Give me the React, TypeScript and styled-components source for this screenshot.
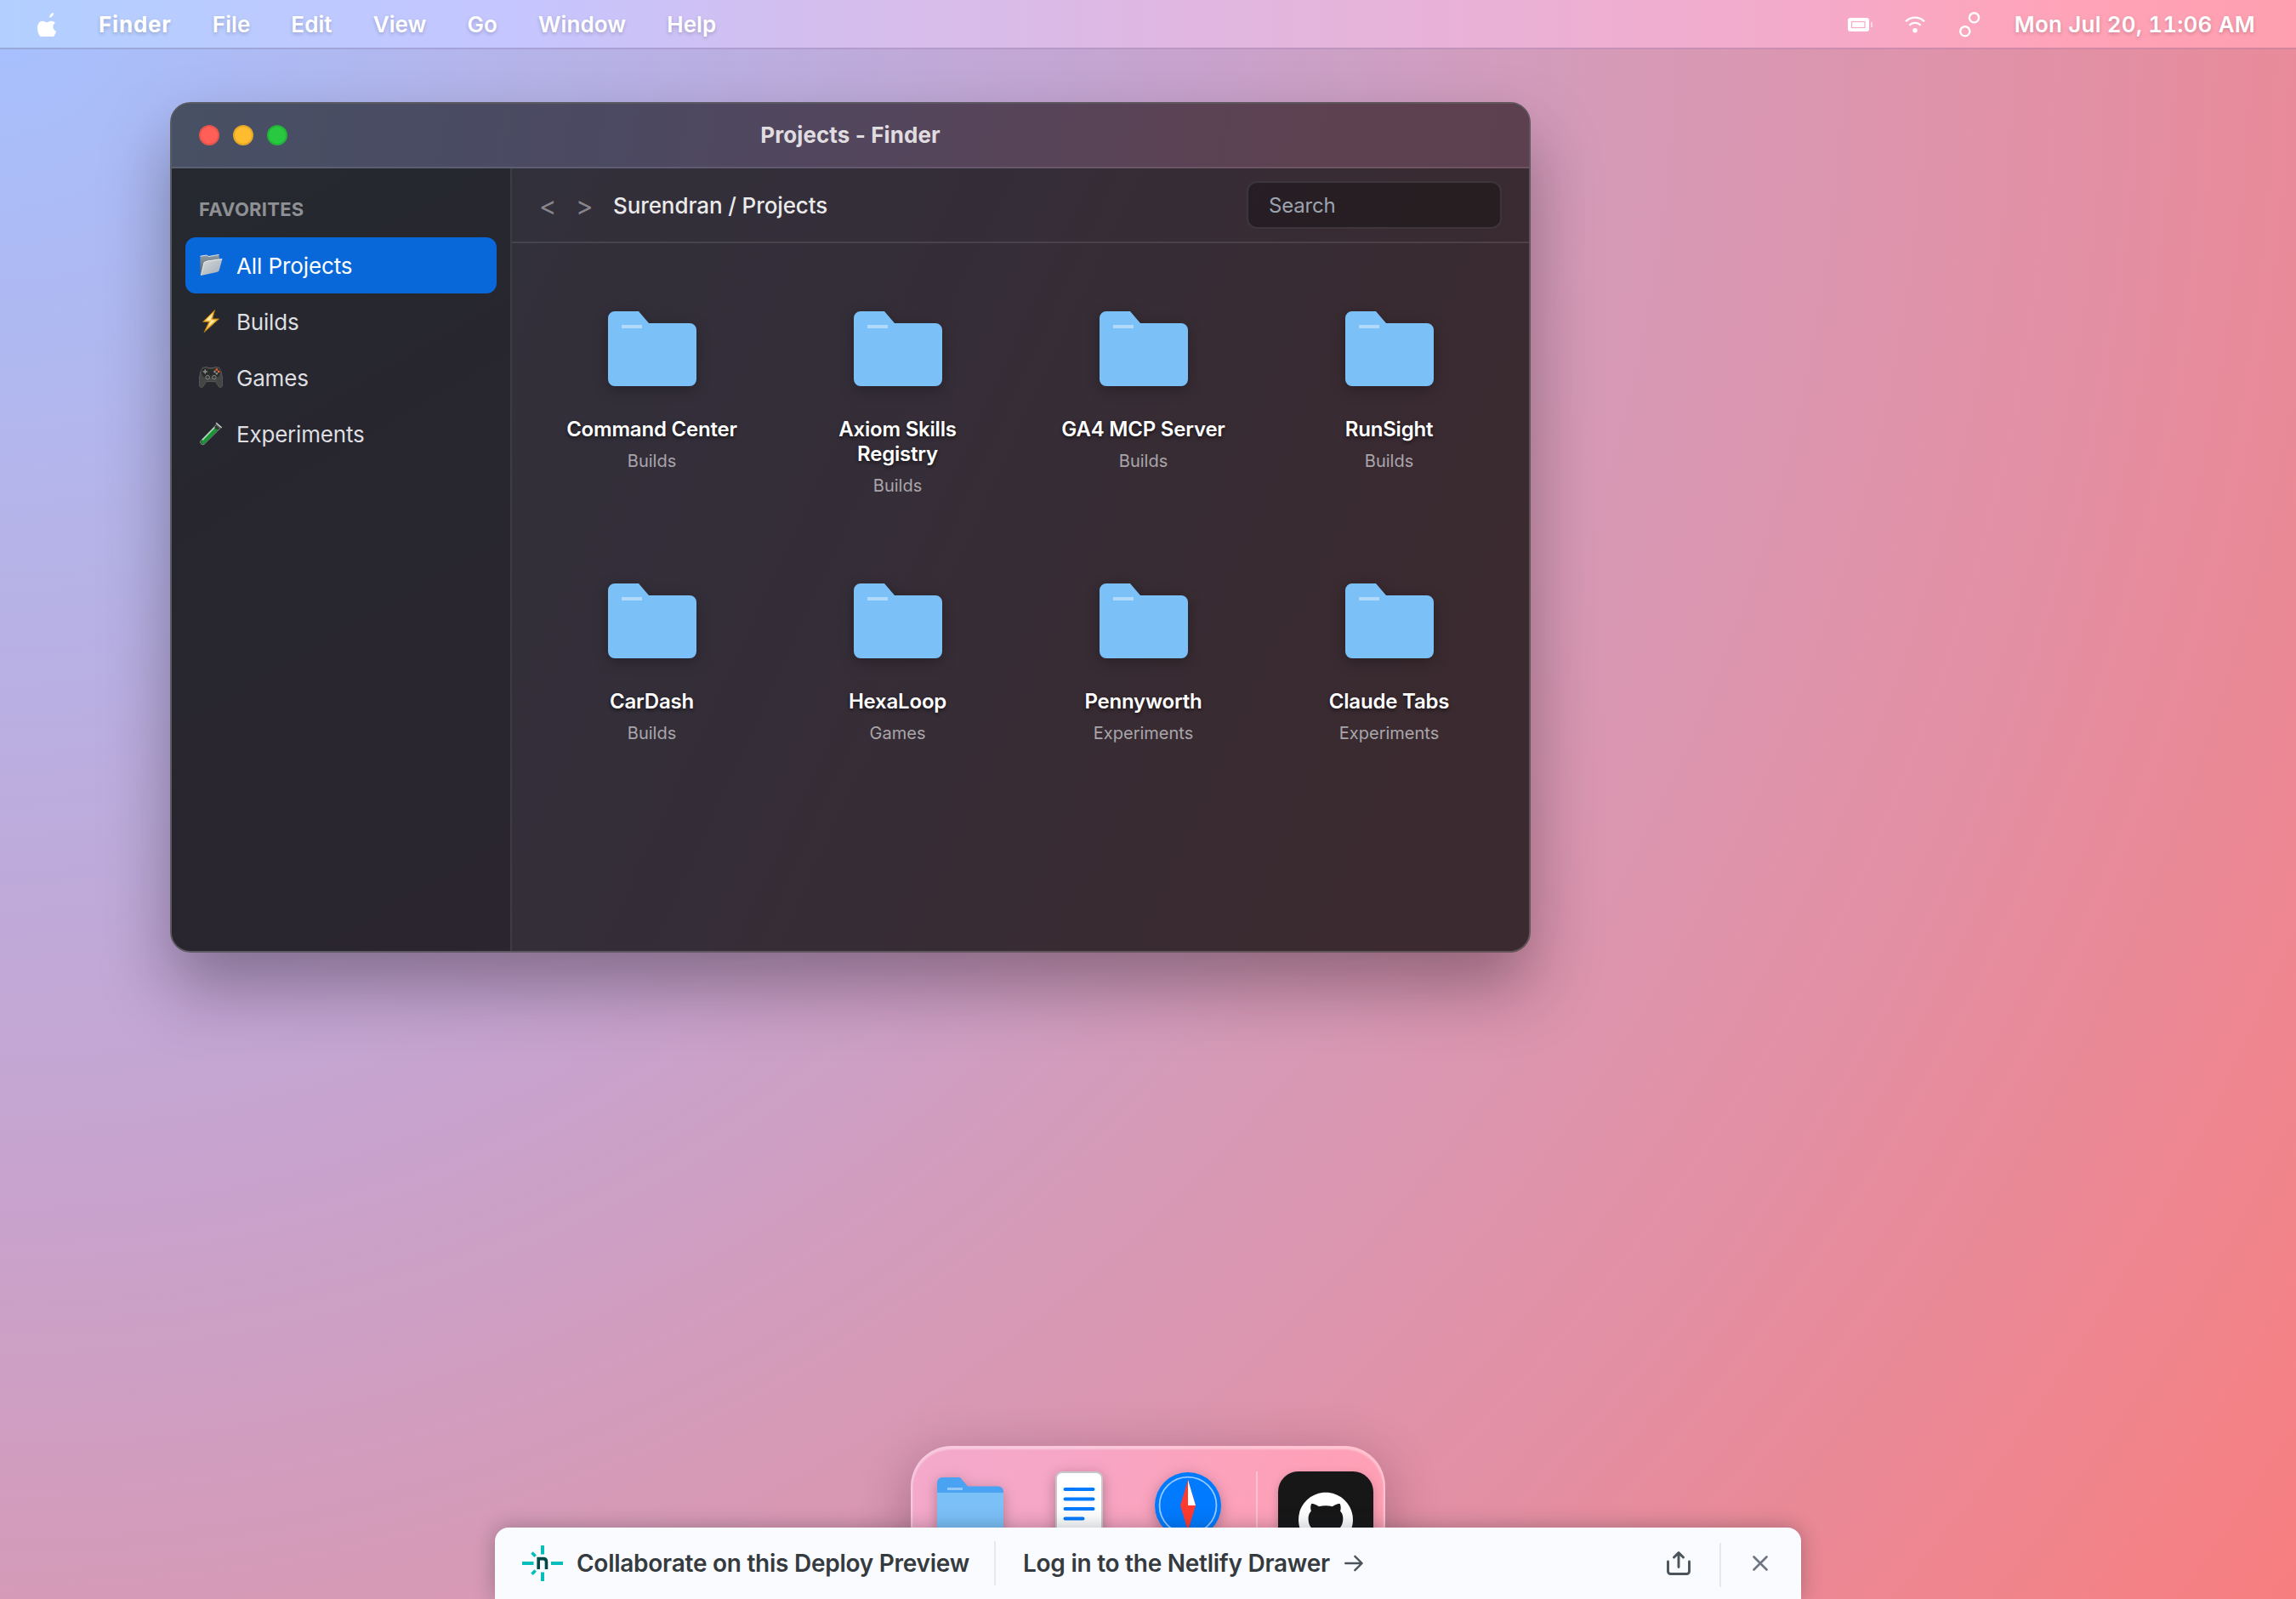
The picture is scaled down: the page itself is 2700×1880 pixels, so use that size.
import React from "react";
import styled, { createGlobalStyle, css } from "styled-components";
import { SiGithub } from "react-icons/si";

const GlobalStyle = createGlobalStyle`
  *, *::before, *::after { box-sizing: border-box; }
  html, body { margin: 0; padding: 0; }
  body { font-family: Inter, "Liberation Sans", sans-serif; overflow: hidden; }
`;

const Desktop = styled.div`
  position: relative;
  width: 2700px;
  height: 1880px;
  overflow: hidden;
  display: flex;
  flex-direction: column;
  background: radial-gradient(circle at 0 0, #a6c1ff 0%, #c7a3ce 42%, #d69ab7 58%, #e38fa3 75.7%, #f77e7f 100%);
`;

/* ---------- Menu bar ---------- */

const MenuBar = styled.header`
  height: 58px;
  flex: none;
  display: flex;
  align-items: center;
  justify-content: space-between;
  padding: 1px 48px 0 44px;
  color: #fff;
  font-size: 26px;
  border-bottom: 2px solid rgba(70, 50, 100, 0.24);
  background: linear-gradient(90deg, #b2d0ff 0%, #c5c6ff 22%, #d2bff0 34%, #f4abcb 78%, #ffa3b8 90%, #ff9fb0 100%);
  background-clip: border-box;
`;

const MenuGroup = styled.nav`
  display: flex;
  align-items: center;
  gap: 48px;
`;

const StatusGroup = styled.div`
  display: flex;
  align-items: center;
`;

const MenuItem = styled.span<{ $bold?: boolean }>`
  font-weight: ${(p) => (p.$bold ? 700 : 600)};
  letter-spacing: ${(p) => (p.$bold ? 0.8 : 0.08)}px;
  line-height: 32px;
  white-space: nowrap;
  text-shadow: 0 2px 4px rgba(0, 0, 0, 0.2);
`;

const Clock = styled(MenuItem)`
  letter-spacing: 0.2px;
  font-variant-numeric: tabular-nums;
`;

const Glyph = styled.svg<{ $gap?: number }>`
  display: block;
  flex: none;
  margin-right: ${(p) => p.$gap ?? 0}px;
`;

/* ---------- Finder window ---------- */

const FinderWindow = styled.section`
  position: absolute;
  left: 200px;
  top: 120px;
  width: 1600px;
  height: 1000px;
  display: flex;
  flex-direction: column;
  border-radius: 24px;
  border: 2px solid rgba(255, 255, 255, 0.2);
  background: linear-gradient(115deg, #30323c 0%, #342e39 45%, #392b32 75%, #3b2a2f 100%) border-box;
  box-shadow: 0 40px 80px rgba(20, 10, 20, 0.36);
  overflow: hidden;
`;

const TitleBar = styled.div`
  position: relative;
  height: 76px;
  flex: none;
  display: flex;
  align-items: center;
  padding: 0 32px;
  background: linear-gradient(100deg, #475064 0%, #4c4962 33%, #574459 62%, #5d4150 85%, #5d4050 100%);
  border-bottom: 2px solid rgba(255, 255, 255, 0.1);
`;

const Lights = styled.div`
  display: flex;
  gap: 16px;
`;

const Light = styled.span<{ $color: string }>`
  width: 24px;
  height: 24px;
  border-radius: 50%;
  background: ${(p) => p.$color};
  border: 2px solid rgba(0, 0, 0, 0.1);
`;

const WindowTitle = styled.h1`
  margin: 0;
  flex: 1;
  padding-right: 104px;
  text-align: center;
  font-size: 26px;
  line-height: 32px;
  font-weight: 700;
  letter-spacing: 0.1px;
  color: #e0dde0;
`;

const WindowBody = styled.div`
  flex: 1;
  display: flex;
  min-height: 0;
`;

const Sidebar = styled.aside`
  width: 400px;
  flex: none;
  padding: 32px 16px;
  border-right: 2px solid rgba(255, 255, 255, 0.1);
  background: linear-gradient(150deg, #25292f 0%, #27262f 35%, #2a252e 100%);
`;

const SidebarHeading = styled.h2`
  margin: 0 0 16px;
  padding: 1px 16px 2px;
  font-size: 22px;
  line-height: 30px;
  font-weight: 700;
  letter-spacing: 0.25px;
  color: #8f9094;
`;

const SidebarItem = styled.div<{ $active?: boolean }>`
  height: 66px;
  padding: 0 16px;
  display: flex;
  align-items: center;
  gap: 16px;
  border-radius: 12px;
  font-size: 26px;
  letter-spacing: -0.2px;
  color: #dedee0;
  ${(p) =>
    p.$active &&
    css`
      background: #0868d9;
      color: #fff;
      letter-spacing: -0.1px;
    `}
`;

const Content = styled.main`
  flex: 1;
  display: flex;
  flex-direction: column;
`;

const Toolbar = styled.div`
  height: 88px;
  flex: none;
  display: flex;
  align-items: center;
  padding: 0 32px;
  border-bottom: 2px solid rgba(255, 255, 255, 0.1);
`;

const NavArrow = styled.span`
  width: 21px;
  margin-right: 22px;
  padding-top: 2px;
  font-size: 31px;
  line-height: 32px;
  color: #88858c;
`;

const Path = styled.span`
  flex: 1;
  padding-top: 1px;
  margin-left: 1px;
  font-size: 26px;
  line-height: 32px;
  font-weight: 500;
  letter-spacing: -0.1px;
  color: #ebeaeb;
`;

const SearchBox = styled.div`
  width: 300px;
  height: 56px;
  display: flex;
  align-items: center;
  padding: 0 24px;
  border-radius: 12px;
  border: 2px solid rgba(255, 255, 255, 0.1);
  background: rgba(0, 0, 0, 0.3);
  background-clip: border-box;
  font-size: 24px;
  letter-spacing: -0.2px;
  color: #9ca3af;
`;

const FolderGrid = styled.div`
  padding: 40px;
  display: grid;
  grid-template-columns: repeat(4, 1fr);
  column-gap: 40px;
  grid-auto-rows: 320px;
`;

const FolderCell = styled.div`
  display: flex;
  flex-direction: column;
  align-items: center;
  text-align: center;
  padding-top: 20px;
`;

const FolderName = styled.div`
  max-width: 210px;
  margin-top: 16px;
  font-size: 24px;
  line-height: 29px;
  font-weight: 600;
  letter-spacing: -0.2px;
  color: #fff;
  text-shadow: 0 2px 4px rgba(0, 0, 0, 0.6);
`;

const FolderKind = styled.div`
  margin-top: 9px;
  font-size: 20px;
  line-height: 28px;
  color: #a9a5aa;
`;

const FolderArt = styled.svg<{ $size: number }>`
  display: block;
  flex: none;
  width: ${(p) => p.$size}px;
  height: ${(p) => p.$size}px;
  overflow: visible;
  filter: drop-shadow(0 4px 8px rgba(0, 0, 0, 0.28));
`;

/* ---------- Dock ---------- */

const Dock = styled.div`
  position: absolute;
  left: 1071px;
  top: 1700px;
  width: 558px;
  height: 140px;
  padding: 12px;
  display: flex;
  align-items: center;
  border-radius: 48px;
  border: 2px solid rgba(255, 255, 255, 0.36);
  background: linear-gradient(115deg, #f4aacb 0%, #f6a6c6 30%, #fca2bc 60%, #ff9fb3 100%) border-box;
  box-shadow: 0 16px 64px rgba(40, 10, 30, 0.3), inset 0 2px 2px rgba(255, 255, 255, 0.4);
`;

const DockCell = styled.div`
  width: 112px;
  height: 112px;
  margin-right: 16px;
  display: flex;
  align-items: center;
  justify-content: center;
`;

const DockDivider = styled.span`
  width: 2px;
  height: 80px;
  flex: none;
  margin: 0 24px 0 8px;
  background: rgba(255, 255, 255, 0.35);
`;

const GithubTile = styled.div`
  width: 112px;
  height: 112px;
  flex: none;
  margin-top: 32px;
  display: flex;
  align-items: center;
  justify-content: center;
  border-radius: 24px;
  background: #171717;
  color: #fff;
  box-shadow: 0 4px 12px rgba(0, 0, 0, 0.2);
`;

/* ---------- Deploy preview drawer ---------- */

const Drawer = styled.div`
  position: absolute;
  left: 582px;
  top: 1796px;
  width: 1536px;
  height: 84px;
  padding: 0 39px 0 32px;
  display: flex;
  align-items: center;
  border-radius: 16px 16px 0 0;
  background: #fafbff;
  box-shadow: 0 0 24px rgba(14, 30, 37, 0.3);
`;

const DrawerText = styled.span<{ $width: number; $left: number }>`
  width: ${(p) => p.$width}px;
  margin-left: ${(p) => p.$left}px;
  font-size: 28px;
  line-height: 36px;
  font-weight: 640;
  letter-spacing: -0.26px;
  white-space: nowrap;
  color: #353a3e;
`;

const DrawerRule = styled.span<{ $drop?: number }>`
  width: 2px;
  height: 52px;
  margin-top: ${(p) => p.$drop ?? 0}px;
  background: #e6e8ec;
`;

const Spacer = styled.span`
  flex: 1;
`;

const CloseButton = styled.span`
  display: flex;
  padding-left: 37px;
`;

/* ---------- Drawings ---------- */

const AppleIcon = () => (
  <Glyph width="24" height="28" viewBox="0 0 24 28" fill="#fff">
    <path d="M14 5.600C14.200 2.600 16.400.4 19 0c.3 3-2 5.400-5 5.600z" />
    <path d="M11.200 11.200c1.200 0 2.800-1.400 5.200-1.400 1.700 0 3.400.7 4.500 2.200-3.800 2.600-3.200 7.900 1.200 9.800-.6 2-1.500 4-2.900 6.200H3.400C1 25 0 21.400 0 18c0-5 2.600-8.200 6-8.200 2.200 0 3.800 1.400 5.200 1.400z" />
  </Glyph>
);

const BatteryIcon = () => (
  <Glyph width="30" height="16" viewBox="0 0 30 16" $gap={37}>
    <rect x="0" y="0" width="25" height="16" rx="3" fill="#fff" />
    <rect x="4.5" y="4.5" width="15.5" height="7" fill="none" stroke="#f5aac6" strokeWidth="1.2" />
    <rect x="27.4" y="5" width="1.3" height="6" fill="#fff" opacity="0.8" />
  </Glyph>
);

const WifiIcon = () => (
  <Glyph width="24" height="20" viewBox="0 0 24 20" $gap={40} fill="none" stroke="#fff" strokeWidth="2.3">
    <path d="M1 6.200C7.200 0 16.800 0 23 6.200" />
    <path d="M5.400 10.600C9 7 15 7 18.600 10.600" />
    <circle cx="12" cy="16.800" r="2.700" fill="#fff" stroke="none" />
  </Glyph>
);

const ControlIcon = () => (
  <Glyph width="26" height="32" viewBox="0 0 26 32" $gap={39} fill="none" stroke="#fff" strokeWidth="2.4">
    <circle cx="17.500" cy="7.800" r="5.600" />
    <circle cx="6.800" cy="23.800" r="5.600" />
  </Glyph>
);

const Folder = ({ size, twoTone }: { size: number; twoTone?: boolean }) => (
  <FolderArt $size={size} viewBox="0 0 64 64">
    <path
      d="M6 14a4 4 0 0 1 4-4h14l6 7h24a4 4 0 0 1 4 4v29a4 4 0 0 1-4 4H10a4 4 0 0 1-4-4z"
      fill={twoTone ? "#4aa3f2" : "#7cc0f8"}
    />
    {twoTone && <path d="M6 22h52v28a4 4 0 0 1-4 4H10a4 4 0 0 1-4-4z" fill="#7cc0f8" />}
    <rect x="14" y="18" width="12" height="2" fill="#fff" opacity="0.4" />
  </FolderArt>
);

const OpenFolderGlyph = () => (
  <Glyph width="28" height="28" viewBox="0 0 28 28">
    <defs>
      <linearGradient id="ofBack" x1="0" y1="0" x2="0" y2="1">
        <stop offset="0" stopColor="#8f9ca6" />
        <stop offset="1" stopColor="#52616e" />
      </linearGradient>
      <linearGradient id="ofFront" x1="0" y1="0" x2="1" y2="1">
        <stop offset="0" stopColor="#d5dadd" />
        <stop offset="1" stopColor="#a3adb5" />
      </linearGradient>
    </defs>
    <path d="M1.5 3.2 9.5 2l1.5 1.6L23.5 1.4l.6 6L3 25 1.3 24z" fill="url(#ofBack)" />
    <path d="M1.5 3.2 9.5 2l1.5 1.6L23.5 1.4" stroke="#dce2e6" strokeWidth="1" fill="none" />
    <path d="M6 10.2 10 8.8l17.5-2.5-4 14.2-1.3 1.1L2.3 26z" fill="url(#ofFront)" />
    <path d="M2.3 25.6 6 10.6l4-1.6 17-2.4" stroke="#eef1f2" strokeWidth="0.9" fill="none" />
  </Glyph>
);

const BoltGlyph = () => (
  <Glyph width="28" height="28" viewBox="0 0 28 28">
    <path d="M18.6.6 4.4 14.4h7.3L6 26.8 23.6 10.9h-7.8z" fill="#f3b93c" stroke="#a9700f" strokeWidth="1" />
    <path d="M16.2 4.6 8 12.8h6.1l-3.4 7.4 8.4-7.8h-5.6z" fill="#ffeeb0" />
  </Glyph>
);

const GamepadGlyph = () => (
  <Glyph width="28" height="28" viewBox="0 0 28 28">
    <path
      d="M5 2.2c2.5-1 5-.6 6.200.2h5.600c1.200-.8 3.700-1.200 6.200-.2C26 3.500 27.600 11 27.800 21c0 2.600-1 4.600-2.600 4.600-2.200 0-4-4.800-6-7H8.800c-2 2.200-3.800 7-6 7C1.200 25.600.2 23.600.2 21 .4 11 2 3.500 5 2.200z"
      fill="#454644"
      stroke="#62635f"
      strokeWidth="0.8"
    />
    <path d="M3 4.500C5.500 2 9.500 2.400 11 4h6c1.500-1.600 5.500-2 8 .5.8 4-1 8.500-4 9.500H7C4 13 2.200 8.500 3 4.500z" fill="#2a2b2b" />
    <path d="M7.200 4.200v5.400M4.500 6.900h5.400" stroke="#8d9090" strokeWidth="1.500" />
    <circle cx="20.800" cy="4.600" r="1.400" fill="#f0622b" />
    <circle cx="20.800" cy="9.200" r="1.300" fill="#8d9090" />
    <circle cx="18.500" cy="6.900" r="1.300" fill="#8d9090" />
    <circle cx="23.100" cy="6.900" r="1.400" fill="#f0622b" />
    <circle cx="10.200" cy="13.600" r="2.300" fill="#3a3b3b" stroke="#8a8d8d" strokeWidth="0.9" />
    <circle cx="17.800" cy="13.600" r="2.300" fill="#3a3b3b" stroke="#8a8d8d" strokeWidth="0.9" />
  </Glyph>
);

const TubeGlyph = () => (
  <Glyph width="28" height="28" viewBox="0 0 28 28">
    <path d="M20.500 3 2.400 21.800a2.900 2.900 0 0 0 4.100 4.100L25 7.500z" fill="#2c3a32" stroke="#9aa69f" strokeWidth="0.9" />
    <path d="M18 8 3.200 22.600a2.200 2.200 0 0 0 3 3L22.500 9z" fill="#149a33" />
    <path d="M18.500 6.500 4 21.500" stroke="#c4f0ca" strokeWidth="1.100" />
    <path d="M20.500 1.500l5.800 5" stroke="#d3d8d6" strokeWidth="1.300" strokeLinecap="round" />
  </Glyph>
);

const DocIcon = () => (
  <FolderArt $size={96} viewBox="0 0 96 96">
    <rect x="21" y="9" width="54" height="78" rx="7" fill="#fff" stroke="#c7c7cc" strokeWidth="2" />
    <path d="M31.500 29h33M31.500 40.500h33M31.500 52h33M31.500 63.500h21" stroke="#007aff" strokeWidth="4" strokeLinecap="round" />
  </FolderArt>
);

const CompassIcon = () => (
  <FolderArt $size={96} viewBox="0 0 64 64">
    <circle cx="32" cy="32" r="26" fill="#007aff" />
    <circle cx="32" cy="32" r="22.300" fill="none" stroke="#fff" strokeOpacity="0.6" strokeWidth="1.200" />
    <path d="M32 12l6 20-6 20-6-20z" fill="#ff3b30" />
    <path d="M32 12l6 20h-6z" fill="#fff" />
  </FolderArt>
);

const NetlifyMark = () => (
  <Glyph width="48" height="42" viewBox="0 0 48 42">
    <path d="M24 0v10.500M24 31.500V42M0 21h13.500M34 21h14" stroke="#05bdba" strokeWidth="4" />
    <path d="M11.500 8.500l4.200 4.200M11.500 33.700l4.200-4.200" stroke="#05bdba" strokeWidth="3.600" />
    <path d="M19.200 28V15.600h5.600c2.400 0 3.700 1.200 3.700 3.600V28" stroke="#014847" strokeWidth="3.600" fill="none" />
  </Glyph>
);

const ArrowIcon = () => (
  <Glyph width="22" height="20" viewBox="0 0 22 20" fill="none" stroke="#4b535b" strokeWidth="2.400" strokeLinecap="round" strokeLinejoin="round">
    <path d="M1.200 10h19M12.400 1.800 20.600 10l-8.200 8.200" />
  </Glyph>
);

const ShareIcon = () => (
  <Glyph width="28" height="28" viewBox="0 0 28 28" $gap={34} fill="none" stroke="#4b535b" strokeWidth="2.900" strokeLinecap="round" strokeLinejoin="round">
    <path d="M14 18.500V2M8.500 7 14 1.600 19.500 7" />
    <path d="M1.500 12v11.500a3 3 0 0 0 3 3h19a3 3 0 0 0 3-3V12" />
  </Glyph>
);

const CloseIcon = () => (
  <Glyph width="18" height="18" viewBox="0 0 18 18" fill="none" stroke="#6d7580" strokeWidth="2.600" strokeLinecap="round">
    <path d="M1.500 1.500l15 15M16.500 1.500l-15 15" />
  </Glyph>
);

/* ---------- Data ---------- */

const menus = ["File", "Edit", "View", "Go", "Window", "Help"];

const places = [
  { label: "All Projects", icon: <OpenFolderGlyph />, active: true },
  { label: "Builds", icon: <BoltGlyph /> },
  { label: "Games", icon: <GamepadGlyph /> },
  { label: "Experiments", icon: <TubeGlyph /> },
];

const projects = [
  { name: "Command Center", kind: "Builds" },
  { name: "Axiom Skills Registry", kind: "Builds" },
  { name: "GA4 MCP Server", kind: "Builds" },
  { name: "RunSight", kind: "Builds" },
  { name: "CarDash", kind: "Builds" },
  { name: "HexaLoop", kind: "Games" },
  { name: "Pennyworth", kind: "Experiments" },
  { name: "Claude Tabs", kind: "Experiments" },
];

export default function App() {
  return (
    <>
      <GlobalStyle />
      <Desktop>
        <MenuBar>
          <MenuGroup>
            <AppleIcon />
            <MenuItem $bold>Finder</MenuItem>
            {menus.map((m) => (
              <MenuItem key={m}>{m}</MenuItem>
            ))}
          </MenuGroup>
          <StatusGroup>
            <BatteryIcon />
            <WifiIcon />
            <ControlIcon />
            <Clock>Mon Jul 20, 11:06 AM</Clock>
          </StatusGroup>
        </MenuBar>

        <FinderWindow>
          <TitleBar>
            <Lights>
              <Light $color="#ff5f57" />
              <Light $color="#febc2e" />
              <Light $color="#28c840" />
            </Lights>
            <WindowTitle>Projects - Finder</WindowTitle>
          </TitleBar>
          <WindowBody>
            <Sidebar>
              <SidebarHeading>FAVORITES</SidebarHeading>
              {places.map((p) => (
                <SidebarItem key={p.label} $active={p.active}>
                  {p.icon}
                  {p.label}
                </SidebarItem>
              ))}
            </Sidebar>
            <Content>
              <Toolbar>
                <NavArrow>&lt;</NavArrow>
                <NavArrow>&gt;</NavArrow>
                <Path>Surendran / Projects</Path>
                <SearchBox>Search</SearchBox>
              </Toolbar>
              <FolderGrid>
                {projects.map((p) => (
                  <FolderCell key={p.name}>
                    <Folder size={128} />
                    <FolderName>{p.name}</FolderName>
                    <FolderKind>{p.kind}</FolderKind>
                  </FolderCell>
                ))}
              </FolderGrid>
            </Content>
          </WindowBody>
        </FinderWindow>

        <Dock>
          <DockCell>
            <Folder size={96} twoTone />
          </DockCell>
          <DockCell>
            <DocIcon />
          </DockCell>
          <DockCell>
            <CompassIcon />
          </DockCell>
          <DockDivider />
          <GithubTile>
            <SiGithub size={64} />
          </GithubTile>
        </Dock>

        <Drawer>
          <NetlifyMark />
          <DrawerText $left={16} $width={491}>
            Collaborate on this Deploy Preview
          </DrawerText>
          <DrawerRule />
          <DrawerText $left={32} $width={378}>
            Log in to the Netlify Drawer
          </DrawerText>
          <ArrowIcon />
          <Spacer />
          <ShareIcon />
          <DrawerRule $drop={4} />
          <CloseButton>
            <CloseIcon />
          </CloseButton>
        </Drawer>
      </Desktop>
    </>
  );
}
